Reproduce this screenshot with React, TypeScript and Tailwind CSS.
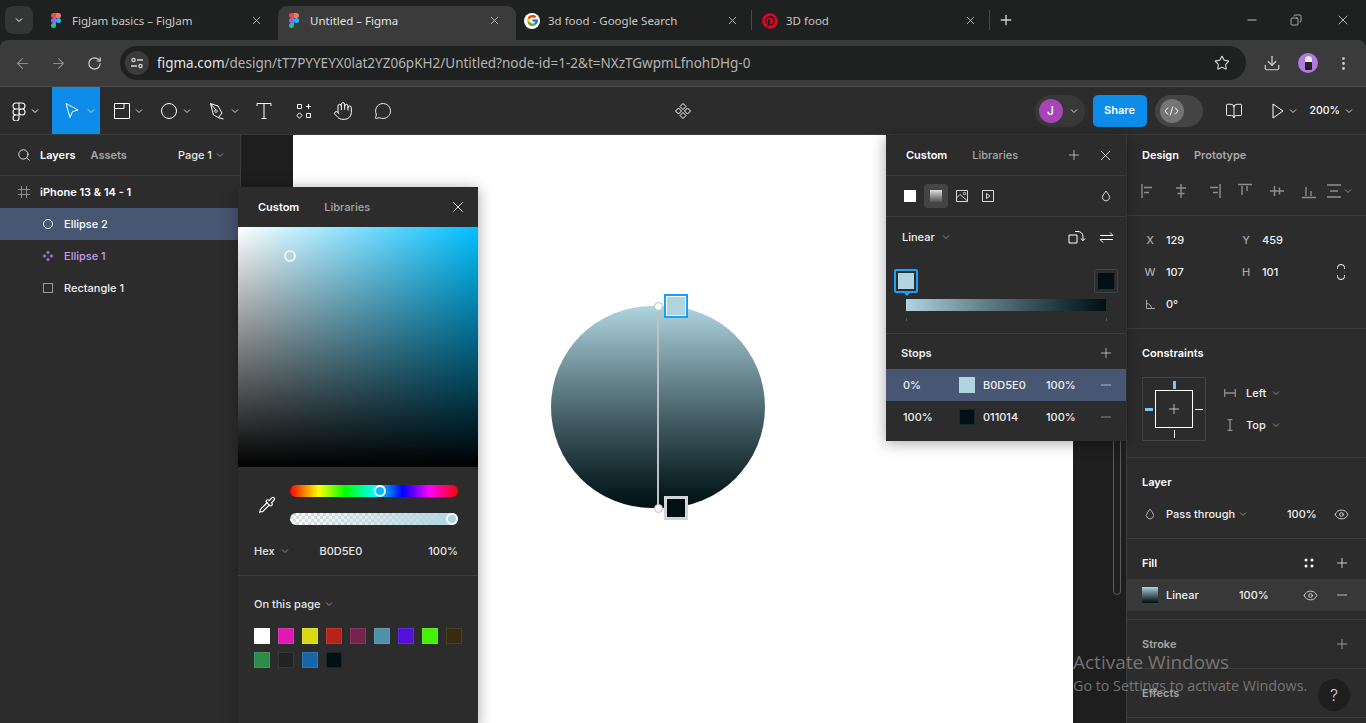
import type { ReactNode } from "react";
import {
  ArrowLeft,
  ArrowRight,
  BookOpen,
  Copy,
  Download,
  EllipsisVertical,
  Eye,
  Hand,
  MessageCircle,
  Minus,
  Pipette,
  Plus,
  RotateCw,
  Search,
  Star,
  X,
} from "lucide-react";
import { FcGoogle } from "react-icons/fc";
import { FaPinterest } from "react-icons/fa";

const swatches = [
  "#ffffff", "#e019b4", "#d9d915", "#b92216", "#75224e", "#5090a8", "#5310da", "#46f108", "#3a2b10",
  "#2b8b47", "#222222", "#1766a6", "#011014",
];

function Chevron({ className = "" }: { className?: string }) {
  return (
    <svg width="8" height="6" viewBox="0 0 8 6" fill="none" stroke="currentColor" className={className}>
      <path d="M1 1.5 4 4.5 7 1.5" />
    </svg>
  );
}

function FigmaLogo() {
  return (
    <svg width="10" height="15" viewBox="0 0 38 57">
      <path fill="#f24e1e" d="M0 9.5A9.5 9.5 0 0 1 9.5 0H19v19H9.5A9.5 9.5 0 0 1 0 9.5Z" />
      <path fill="#ff7262" d="M19 0h9.5a9.5 9.5 0 0 1 0 19H19V0Z" />
      <path fill="#1abcfe" d="M19 28.5a9.5 9.5 0 1 1 19 0 9.5 9.5 0 0 1-19 0Z" />
      <path fill="#a259ff" d="M0 28.5A9.5 9.5 0 0 1 9.5 19H19v19H9.5A9.5 9.5 0 0 1 0 28.5Z" />
      <path fill="#0acf83" d="M0 47.5A9.5 9.5 0 0 1 9.5 38H19v9.5a9.5 9.5 0 0 1-19 0Z" />
    </svg>
  );
}

function Drop() {
  return (
    <svg width="10" height="12" viewBox="0 0 10 12" fill="none" stroke="currentColor">
      <path d="M5 1 7.8 5a3.6 3.6 0 1 1-5.6 0L5 1Z" />
    </svg>
  );
}

function ChromeTab({ icon, title, active, sep }: { icon: ReactNode; title: string; active?: boolean; sep?: boolean }) {
  return (
    <div className={`relative flex h-[34px] w-[238px] items-center pb-[5px] text-[11.5px] ${active ? "rounded-t-[9px] bg-[#3b3b3b] text-[#e3e3e3]" : "text-[#c7c7c7]"}`}>
      <div className="flex w-[32px] justify-center">{icon}</div>
      <span className="w-[176px] truncate">{title}</span>
      <X size={13} strokeWidth={1.6} className="ml-[2px] text-[#c7c7c7]" />
      {sep && <div className="absolute right-[2px] top-[4px] h-[20px] w-px bg-[#4a4a4a]" />}
    </div>
  );
}

function Tool({ w, children, chevron, active }: { w: string; children: ReactNode; chevron?: boolean; active?: boolean }) {
  return (
    <div className={`relative flex h-full items-center justify-center text-white ${w} ${active ? "bg-[#0d8ce9]" : ""}`}>
      {children}
      {chevron && <Chevron className="absolute right-[5px] top-[21px] text-[#d8d8d8]" />}
    </div>
  );
}

function LayerRow({ icon, label, selected, purple }: { icon: ReactNode; label: string; selected?: boolean; purple?: boolean }) {
  return (
    <div className={`flex h-[32px] items-center pl-[41px] ${selected ? "bg-[#475673] text-white" : ""} ${purple ? "text-[#c79bf2]" : "text-[#f0f0f0]"}`}>
      <div className="flex w-[14px] justify-center">{icon}</div>
      <span className="ml-[9px]">{label}</span>
    </div>
  );
}

function Section({ h, children, className = "" }: { h: string; children: ReactNode; className?: string }) {
  return <div className={`border-b border-[#3d3d3d] ${h} ${className}`}>{children}</div>;
}

function PropRow({ a, av, b, bv }: { a: ReactNode; av: string; b?: ReactNode; bv?: string }) {
  return (
    <div className="flex h-[32px] items-center">
      <div className="flex w-[16px] justify-center text-[#a8a8a8]">{a}</div>
      <span className="ml-[8px] w-[72px] text-[#f0f0f0]">{av}</span>
      {b && <div className="flex w-[16px] justify-center text-[#a8a8a8]">{b}</div>}
      {bv && <span className="ml-[8px] text-[#f0f0f0]">{bv}</span>}
    </div>
  );
}

function AlignIcon({ d }: { d: string }) {
  return (
    <svg width="16" height="16" viewBox="0 0 16 16" stroke="#8e8e8e" strokeWidth="1.4" fill="none" className="w-[32px]">
      <path d={d} />
    </svg>
  );
}

export default function App() {
  return (
    <div className="flex h-[723px] w-[1366px] flex-col overflow-hidden bg-[#1f2020] font-['Inter',sans-serif] text-[11px] font-medium">
      {/* browser tabs */}
      <div className="flex h-[40px] shrink-0 items-end font-['Noto_Sans',sans-serif] font-normal">
        <div className="mb-[6px] ml-[5px] mr-[7px] flex h-[28px] w-[28px] items-center justify-center rounded-[8px] bg-[#343535] text-white">
          <Chevron />
        </div>
        <ChromeTab icon={<FigmaLogo />} title="FigJam basics – FigJam" />
        <ChromeTab icon={<FigmaLogo />} title="Untitled – Figma" active />
        <ChromeTab
          icon={
            <div className="flex h-[16px] w-[16px] items-center justify-center rounded-full bg-white">
              <FcGoogle size={13} />
            </div>
          }
          title="3d food - Google Search"
          sep
        />
        <ChromeTab icon={<FaPinterest size={16} color="#e60023" />} title="3D food" sep />
        <Plus size={16} strokeWidth={2} className="mb-[12px] ml-[6px] text-[#d0d0d0]" />
        <div className="ml-auto flex items-center pb-[12px] text-[#f0f0f0]">
          <Minus size={14} strokeWidth={1.3} className="mr-[31px]" />
          <Copy size={12} strokeWidth={1.3} className="mr-[33px] scale-x-[-1]" />
          <X size={16} strokeWidth={1.1} className="mr-[15px]" />
        </div>
      </div>

      {/* address bar */}
      <div className="flex h-[47px] shrink-0 items-center rounded-t-[8px] border-b border-[#4a4a4a] bg-[#3b3b3b] font-['Noto_Sans',sans-serif] font-normal text-[#c7c7c7]">
        <ArrowLeft size={17} strokeWidth={1.6} className="ml-[14px] text-[#8b8b8b]" />
        <ArrowRight size={17} strokeWidth={1.6} className="ml-[19px] text-[#8b8b8b]" />
        <RotateCw size={15} strokeWidth={1.8} className="ml-[20px] text-[#d0d0d0]" />
        <div className="ml-[18px] flex h-[34px] w-[1126px] items-center rounded-full bg-[#1f2020]">
          <div className="ml-[5px] flex h-[24px] w-[24px] items-center justify-center rounded-full bg-[#3b3b3b]">
            <svg width="14" height="12" viewBox="0 0 14 12" fill="none" stroke="#d8d8d8" strokeWidth="1.3">
              <circle cx="3.5" cy="3" r="1.6" />
              <path d="M7 3h6M1 9h6" />
              <circle cx="10.5" cy="9" r="1.6" />
            </svg>
          </div>
          <span className="ml-[8px] text-[13.5px] text-[#e3e3e3]">
            figma.com<span className="text-[#b4b4b4]">/design/tT7PYYEYX0lat2YZ06pKH2/Untitled?node-id=1-2&amp;t=NXzTGwpmLfnohDHg-0</span>
          </span>
          <Star size={16} strokeWidth={1.7} className="ml-auto mr-[16px] text-[#d0d0d0]" />
        </div>
        <Download size={18} strokeWidth={1.6} className="ml-[17px] text-[#d0d0d0]" />
        <div className="ml-[17px] flex h-[20px] w-[20px] flex-col items-center justify-center rounded-full bg-[#b07be0]">
          <div className="h-[6px] w-[7px] rounded-t-full bg-[#e8e8e8]" />
          <div className="h-[8px] w-[7px] rounded-b-[1px] bg-[#222]" />
        </div>
        <EllipsisVertical size={17} className="ml-[17px] text-[#d0d0d0]" />
      </div>

      {/* figma toolbar */}
      <div className="grid h-[48px] shrink-0 grid-cols-[1fr_auto_1fr] border-b border-[#3a3a3a] bg-[#2c2c2c]">
        <div className="flex h-[47px]">
          <Tool w="w-[52px]">
            <svg width="16" height="20" viewBox="0 0 16 20" fill="none" stroke="white" strokeWidth="1.1" className="mr-[14px]">
              <path d="M8 2H5a3 3 0 0 0 0 6h3V2Zm0 0h3a3 3 0 0 1 0 6H8V2Zm0 6H5a3 3 0 0 0 0 6h3V8Zm3 0a3 3 0 1 1 0 6 3 3 0 0 1 0-6ZM8 14H5a3 3 0 1 0 3 3v-3Z" />
            </svg>
            <Chevron className="absolute right-[13px] top-[21px]" />
          </Tool>
          <Tool w="w-[48px]" active chevron>
            <svg width="16" height="18" viewBox="0 0 16 18" fill="none" stroke="white" className="mr-[8px]">
              <path d="M2 1.5 14 8l-5.5 1.6L6 15.5 2 1.5Z" />
            </svg>
          </Tool>
          <Tool w="w-[48px]" chevron>
            <svg width="16" height="16" viewBox="0 0 16 16" fill="none" stroke="white" className="mr-[4px]">
              <path d="M.5.5h15v15H.5zM.5 5.5h9.5V.5" />
            </svg>
          </Tool>
          <Tool w="w-[48px]" chevron>
            <svg width="16" height="16" viewBox="0 0 16 16" fill="none" stroke="white" className="mr-[6px]">
              <circle cx="8" cy="8" r="7.5" />
            </svg>
          </Tool>
          <Tool w="w-[48px]" chevron>
            <svg width="16" height="18" viewBox="0 0 16 18" fill="none" stroke="white" className="mr-[6px]">
              <path d="M1.5 1.5 9 4l4 7-3.5 4.5-5-2.5-3-11.5Zm0 0L7 8m2 7.5 5.5 1.5M7 8a1.2 1.2 0 1 0 .01 0" />
            </svg>
          </Tool>
          <Tool w="w-[40px]">
            <svg width="16" height="18" viewBox="0 0 16 18" fill="none" stroke="white">
              <path d="M1 4V1.5h14V4M8 1.5v15M5.5 16.5h5" />
            </svg>
          </Tool>
          <Tool w="w-[39px]">
            <svg width="16" height="16" viewBox="0 0 16 16" fill="none" stroke="white">
              <path d="M1.5 1.5h4v4h-4zM10.500 10.500h4v4h-4zM12.500 1v5M10 3.500h5M3.500 9.800l2.700 2.700-2.700 2.700-2.700-2.700z" />
            </svg>
          </Tool>
          <Tool w="w-[40px]">
            <Hand size={20} strokeWidth={1.2} />
          </Tool>
          <Tool w="w-[40px]">
            <MessageCircle size={18} strokeWidth={1.2} />
          </Tool>
        </div>

        <div className="flex h-[47px] items-center justify-center text-white">
          <svg width="18" height="18" viewBox="0 0 18 18" fill="none" stroke="white">
            <path d="M9 1.500 12 4.500 9 7.500 6 4.500zM9 10.500 12 13.500 9 16.500 6 13.500zM4.500 6 7.500 9 4.500 12 1.500 9zM13.500 6 16.500 9 13.500 12 10.500 9z" />
          </svg>
        </div>

        <div className="flex h-[47px] items-center justify-end text-white">
          <div className="flex h-[32px] w-[50px] items-center rounded-full bg-[#383838]">
            <div className="ml-[4px] flex h-[24px] w-[24px] items-center justify-center rounded-full bg-[#a745b8] text-[12px]">J</div>
            <Chevron className="ml-[7px] text-[#d8d8d8]" />
          </div>
          <div className="ml-[8px] flex h-[32px] w-[54px] items-center justify-center rounded-[5px] bg-[#0d8ce9] font-semibold">Share</div>
          <div className="ml-[8px] flex h-[32px] w-[48px] items-center rounded-full bg-[#444444]">
            <div className="ml-[5px] flex h-[24px] w-[24px] items-center justify-center rounded-full bg-[#757575]">
              <svg width="15" height="10" viewBox="0 0 15 10" fill="none" stroke="white">
                <path d="M4 1.500 1 5l3 3.500M11 1.500 14 5l-3 3.500M8.800.5 6.200 9.500" />
              </svg>
            </div>
          </div>
          <BookOpen size={18} strokeWidth={1.2} className="ml-[22px]" />
          <svg width="12" height="16" viewBox="0 0 12 16" fill="none" stroke="white" className="ml-[29px]">
            <path d="M1 1v14l10-7z" />
          </svg>
          <Chevron className="ml-[5px] text-[#d8d8d8]" />
          <span className="ml-[13px] text-[10.5px]">200%</span>
          <Chevron className="ml-[5px] mr-[13px] text-[#d8d8d8]" />
        </div>
      </div>

      {/* editor */}
      <div className="relative flex min-h-0 flex-1">
        {/* layers panel */}
        <div className="w-[241px] shrink-0 border-r border-[#3d3d3d] bg-[#2c2c2c]">
          <div className="flex h-[41px] items-center border-b border-[#3d3d3d] pl-[17px]">
            <Search size={14} strokeWidth={1.4} className="text-white" />
            <span className="ml-[9px] font-semibold text-white">Layers</span>
            <span className="ml-[15px] font-semibold text-[#a8a8a8]">Assets</span>
            <span className="ml-[51px] text-[#e6e6e6]">Page 1</span>
            <Chevron className="ml-[4px] text-[#8a8a8a]" />
          </div>
          <div className="flex h-[32px] items-center pl-[18px] font-semibold text-white">
            <svg width="12" height="12" viewBox="0 0 12 12" stroke="#8e8e8e" fill="none">
              <path d="M3.500 0v12M8.500 0v12M0 3.500h12M0 8.500h12" />
            </svg>
            <span className="ml-[10px]">iPhone 13 &amp; 14 - 1</span>
          </div>
          <LayerRow
            selected
            label="Ellipse 2"
            icon={<span className="h-[10px] w-[10px] rounded-full border border-white" />}
          />
          <LayerRow
            purple
            label="Ellipse 1"
            icon={
              <svg width="12" height="12" viewBox="0 0 12 12" fill="#9a6fd0">
                <path d="M6 .5 8 2.500 6 4.500 4 2.500zM6 7.500 8 9.500 6 11.500 4 9.500zM2.500 4 4.500 6 2.500 8 .5 6zM9.500 4 11.500 6 9.500 8 7.500 6z" />
              </svg>
            }
          />
          <LayerRow label="Rectangle 1" icon={<span className="h-[10px] w-[10px] border border-[#9a9a9a]" />} />
        </div>

        {/* canvas */}
        <div className="relative flex-1 bg-[#1e1e1e]">
          <div className="ml-[52px] h-full w-[780px] bg-white" />
          {/* gradient ellipse on canvas */}
          <div className="absolute left-[310px] top-[171px] h-[202px] w-[214px] rounded-full bg-gradient-to-b from-[#b0d5e0] to-[#011014]" />
          <div className="absolute left-[416px] top-[171px] h-[202px] w-[2px] bg-[#c0c0c0]" />
          <div className="absolute left-[413px] top-[167px] h-[9px] w-[9px] rounded-full border border-[#bbb] bg-white" />
          <div className="absolute left-[413px] top-[369px] h-[9px] w-[9px] rounded-full border border-[#bbb] bg-white" />
          <div className="absolute left-[423px] top-[159px] h-[24px] w-[24px] border-2 border-[#18a0fb] bg-[#b0d5e0] outline outline-1 -outline-offset-3 outline-white" />
          <div className="absolute left-[423px] top-[361px] h-[24px] w-[24px] border-[3px] border-[#d4d4d4] bg-[#011014]" />
          {/* scrollbar */}
          <div className="absolute left-[872px] top-[20px] h-[440px] w-[8px] rounded-full border border-[#5a5a5a]" />
        </div>

        {/* design panel */}
        <div className="w-[240px] shrink-0 border-l border-[#3d3d3d] bg-[#2c2c2c] text-[#f0f0f0]">
          <Section h="h-[81px]" className="pl-[15px]">
            <div className="flex h-[40px] items-center">
              <span className="font-semibold text-white">Design</span>
              <span className="ml-[15px] font-semibold text-[#a8a8a8]">Prototype</span>
            </div>
            <div className="-ml-[9px] flex h-[32px] items-center">
              <AlignIcon d="M1 1v14M3 4.500h8M3 9.500h5" />
              <AlignIcon d="M8 1v14M3 5h10M4.500 10.500h7" />
              <AlignIcon d="M15 1v14M5 4.500h8M8 9.500h5" />
              <AlignIcon d="M1 1.500h14M5 3v9M10 3v5" />
              <AlignIcon d="M1 8h14M5.500 3v10M10.500 4.500v7" />
              <AlignIcon d="M1 14.500h14M5 4v9M10 8v5" />
              <svg width="16" height="16" viewBox="0 0 16 16" stroke="#8e8e8e" strokeWidth="1.3" fill="none" className="ml-[1px]">
                <path d="M1 2h14M1 14h14M4 8h8" />
              </svg>
              <Chevron className="ml-[2px] text-[#8a8a8a]" />
            </div>
          </Section>
          <Section h="h-[113px]" className="relative pl-[15px] pt-[8px]">
            <PropRow a="X" av="129" b="Y" bv="459" />
            <PropRow a="W" av="107" b="H" bv="101" />
            <PropRow
              a={
                <svg width="9" height="9" viewBox="0 0 9 9" fill="none" stroke="#a8a8a8">
                  <path d="M.5 0v8.500H9M.5 3.500a5 5 0 0 1 5 5" />
                </svg>
              }
              av="0°"
            />
            <svg width="8" height="16" viewBox="0 0 8 16" fill="none" stroke="white" className="absolute left-[210px] top-[48px]">
              <path d="M.5 5V3.500a3.500 3 0 0 1 7 0V5M.5 11v1.500a3.500 3 0 0 0 7 0V11" />
            </svg>
          </Section>
          <Section h="h-[129px]" className="pl-[15px]">
            <div className="flex h-[48px] items-center pt-[1px] font-semibold text-white">Constraints</div>
            <div className="flex">
              <div className="relative h-[64px] w-[64px] border border-[#444]">
                <div className="absolute left-[12px] top-[12px] flex h-[38px] w-[38px] items-center justify-center border border-white">
                  <Plus size={16} strokeWidth={1} className="text-white" />
                </div>
                <div className="absolute left-[30px] top-[3px] h-[8px] w-[3px] bg-[#7cc4f8]" />
                <div className="absolute left-[2px] top-[30px] h-[3px] w-[8px] bg-[#7cc4f8]" />
                <div className="absolute left-[52px] top-[31px] h-px w-[8px] bg-white" />
                <div className="absolute left-[31px] top-[52px] h-[8px] w-px bg-white" />
              </div>
              <div className="ml-[18px]">
                <div className="flex h-[32px] items-center">
                  <svg width="12" height="8" viewBox="0 0 12 8" fill="none" stroke="#8e8e8e" strokeWidth="1.3">
                    <path d="M.7 0v8M11.300 0v8M1 4h10" />
                  </svg>
                  <span className="ml-[10px]">Left</span>
                  <Chevron className="ml-[6px] text-[#8a8a8a]" />
                </div>
                <div className="flex h-[32px] items-center">
                  <svg width="12" height="12" viewBox="0 0 12 12" fill="none" stroke="#8e8e8e" strokeWidth="1.3">
                    <path d="M3.500.7h5M3.500 11.300h5M6 1v10" />
                  </svg>
                  <span className="ml-[10px]">Top</span>
                  <Chevron className="ml-[6px] text-[#8a8a8a]" />
                </div>
              </div>
            </div>
          </Section>
          <Section h="h-[81px]" className="pl-[15px]">
            <div className="flex h-[48px] items-center pt-[1px] font-semibold text-white">Layer</div>
            <div className="flex h-[16px] items-center">
              <div className="flex w-[16px] justify-center text-[#b0b0b0]">
                <Drop />
              </div>
              <span className="ml-[8px] w-[73px]">Pass through</span>
              <Chevron className="text-[#8a8a8a]" />
              <span className="ml-[40px]">100%</span>
              <Eye size={15} strokeWidth={1.3} className="ml-[17px]" />
            </div>
          </Section>
          <Section h="h-[81px]">
            <div className="flex h-[40px] items-center pl-[15px] pr-[16px] pt-[8px] font-semibold text-white">
              <span>Fill</span>
              <svg width="10" height="10" viewBox="0 0 10 10" fill="white" className="ml-auto mr-[20px]">
                <circle cx="2" cy="2" r="1.500" />
                <circle cx="8" cy="2" r="1.500" />
                <circle cx="2" cy="8" r="1.500" />
                <circle cx="8" cy="8" r="1.500" />
              </svg>
              <Plus size={16} strokeWidth={1.1} />
            </div>
            <div className="flex h-[32px] items-center bg-[#383838] pl-[15px]">
              <div className="h-[16px] w-[16px] bg-gradient-to-b from-[#b0d5e0] to-[#011014]" />
              <span className="ml-[8px] w-[73px]">Linear</span>
              <span>100%</span>
              <Eye size={15} strokeWidth={1.3} className="ml-[34px]" />
              <Minus size={16} strokeWidth={1.1} className="ml-[16px]" />
            </div>
          </Section>
          <Section h="h-[49px]" className="flex items-center pl-[15px] pr-[16px]">
            <span className="font-semibold text-[#a8a8a8]">Stroke</span>
            <Plus size={16} strokeWidth={1} className="ml-auto text-[#c8c8c8]" />
          </Section>
          <Section h="h-[49px]" className="flex items-center pl-[15px]">
            <span className="font-semibold text-[#a8a8a8]">Effects</span>
          </Section>
        </div>

        {/* colour picker popup */}
        <div className="absolute left-[238px] top-[52px] h-[540px] w-[240px] bg-[#2c2c2c] shadow-[0_2px_14px_rgba(0,0,0,0.35)]">
          <div className="flex h-[40px] items-center pl-[20px] pr-[11px]">
            <span className="font-semibold text-white">Custom</span>
            <span className="ml-[25px] text-[#a8a8a8]">Libraries</span>
            <X size={18} strokeWidth={1.1} className="ml-auto text-white" />
          </div>
          <div className="relative h-[240px] w-[240px] bg-[linear-gradient(to_top,#000,transparent),linear-gradient(to_right,#fff,#00bfff)]">
            <div className="absolute left-[46px] top-[23px] h-[12px] w-[12px] rounded-full border-2 border-[#f2f2f2] bg-[#b0d5e0]" />
          </div>
          <div className="flex h-[72px] items-start pl-[20px] pt-[18px]">
            <Pipette size={18} strokeWidth={1.6} className="mt-[11px] text-white" />
            <div className="ml-[14px]">
              <div className="relative h-[12px] w-[168px] rounded-full bg-[linear-gradient(to_right,#f00,#ff0_17%,#0f0_33%,#0ff_50%,#00f_67%,#f0f_83%,#f00)]">
                <div className="absolute left-[84px] top-[0px] h-[12px] w-[12px] rounded-full border-2 border-white bg-[#00bfff]" />
              </div>
              <div className="relative mt-[16px] h-[12px] w-[168px] rounded-full bg-[linear-gradient(to_right,transparent,#b0d5e0),repeating-conic-gradient(#dcdcdc_0_25%,#ffffff_0_50%)] bg-[length:100%_100%,6px_6px]">
                <div className="absolute left-[156px] top-[0px] h-[12px] w-[12px] rounded-full border-2 border-white bg-[#b0d5e0]" />
              </div>
            </div>
          </div>
          <div className="flex h-[24px] items-center pl-[16px] text-[#e6e6e6]">
            <span>Hex</span>
            <Chevron className="ml-[6px] text-[#8a8a8a]" />
            <span className="ml-[31px]">B0D5E0</span>
            <span className="ml-auto mr-[20px]">100%</span>
          </div>
          <div className="mt-[12px] border-t border-[#3d3d3d] pl-[16px] pt-[20px]">
            <div className="flex items-center text-[#e6e6e6]">
              <span>On this page</span>
              <Chevron className="ml-[5px] text-[#8a8a8a]" />
            </div>
            <div className="mt-[15px] grid grid-cols-[repeat(9,16px)] gap-[8px]">
              {swatches.map((color) => (
                <div key={color} className="h-[16px] w-[16px] border border-white/10" style={{ backgroundColor: color }} />
              ))}
            </div>
          </div>
        </div>

        {/* gradient popup */}
        <div className="absolute left-[886px] top-0 h-[306px] w-[240px] bg-[#2c2c2c] text-[#f0f0f0] shadow-[0_2px_14px_rgba(0,0,0,0.35)]">
          <div className="flex h-[41px] items-center border-b border-[#3d3d3d] pl-[20px] pr-[12px]">
            <span className="font-semibold text-white">Custom</span>
            <span className="ml-[25px] text-[#a8a8a8]">Libraries</span>
            <Plus size={16} strokeWidth={1.1} className="ml-auto text-[#d8d8d8]" />
            <X size={17} strokeWidth={1.1} className="ml-[15px] text-white" />
          </div>
          <div className="flex h-[41px] items-center border-b border-[#3d3d3d] pl-[18px] pr-[15px]">
            <div className="h-[12px] w-[12px] bg-white" />
            <div className="ml-[8px] flex h-[24px] w-[24px] items-center justify-center rounded-[3px] bg-[#444]">
              <div className="h-[12px] w-[12px] bg-gradient-to-b from-[#ddd] to-[#555]" />
            </div>
            <svg width="12" height="12" viewBox="0 0 12 12" fill="none" stroke="#d8d8d8" className="ml-[8px]">
              <path d="M.5.5h11v11H.5zM.5 8 4 4.500l7.500 6.500" />
              <circle cx="8.500" cy="3.500" r="1.200" />
            </svg>
            <svg width="12" height="12" viewBox="0 0 12 12" fill="none" stroke="#d8d8d8" className="ml-[14px]">
              <path d="M.5.5h11v11H.5zM4.500 3.500 8 6 4.500 8.500z" />
            </svg>
            <div className="ml-auto text-[#d8d8d8]">
              <Drop />
            </div>
          </div>
          <div className="relative h-[117px] border-b border-[#3d3d3d]">
            <div className="flex h-[40px] items-center pl-[16px] pr-[12px]">
              <span>Linear</span>
              <Chevron className="ml-[7px] text-[#8a8a8a]" />
              <svg width="18" height="15" viewBox="0 0 18 15" fill="none" stroke="white" className="ml-auto mr-[13px]">
                <path d="M1 5h8v8H1zM7 1.500h3a5 5 0 0 1 5 5v4m-2.200-2 2.200 2.200 2.200-2.200" />
              </svg>
              <svg width="15" height="13" viewBox="0 0 15 13" fill="none" stroke="white">
                <path d="M1 4.500h13M11 1.500l3 3M14 8.500H1M4 11.500l-3-3" />
              </svg>
            </div>
            <div className="absolute left-[8px] top-[52px] h-[24px] w-[24px] rounded-[2px] border-2 border-[#18a0fb] p-[2px]">
              <div className="h-full w-full bg-[#b0d5e0]" />
            </div>
            <div className="absolute left-[18px] top-[76px] h-0 w-0 border-x-[3px] border-t-[3px] border-x-transparent border-t-[#18a0fb]" />
            <div className="absolute left-[208px] top-[52px] h-[24px] w-[24px] rounded-[2px] border border-[#444] p-[3px]">
              <div className="h-full w-full bg-[#011014]" />
            </div>
            <div className="absolute left-[20px] top-[82px] h-[12px] w-[200px] bg-gradient-to-r from-[#b0d5e0] to-[#011014]" />
            <div className="absolute left-[20px] top-[101px] h-[3px] w-px bg-[#555]" />
            <div className="absolute left-[220px] top-[101px] h-[3px] w-px bg-[#555]" />
          </div>
          <div className="flex h-[35px] items-center pl-[15px] pr-[12px] pt-[3px]">
            <span className="font-semibold">Stops</span>
            <Plus size={16} strokeWidth={1.1} className="ml-auto text-[#d8d8d8]" />
          </div>
          <div className="flex h-[32px] items-center bg-[#475673] pl-[17px] pr-[12px]">
            <span className="w-[56px]">0%</span>
            <div className="h-[16px] w-[16px] bg-[#b0d5e0]" />
            <span className="ml-[8px] w-[63px]">B0D5E0</span>
            <span>100%</span>
            <Minus size={16} strokeWidth={1.1} className="ml-auto text-[#d8d8d8]" />
          </div>
          <div className="flex h-[32px] items-center pl-[17px] pr-[12px]">
            <span className="w-[56px]">100%</span>
            <div className="h-[16px] w-[16px] border border-white/10 bg-[#011014]" />
            <span className="ml-[8px] w-[63px]">011014</span>
            <span>100%</span>
            <Minus size={16} strokeWidth={1.1} className="ml-auto text-[#a8a8a8]" />
          </div>
        </div>

        {/* windows watermark and help */}
        <div className="absolute left-[1073px] top-[514px] font-['Open_Sans',sans-serif] font-normal text-[#8a8a8a]/80">
          <div className="text-[19px] leading-[27px]">Activate Windows</div>
          <div className="text-[14.3px] leading-[19px]">Go to Settings to activate Windows.</div>
        </div>
        <div className="absolute left-[1318px] top-[544px] flex h-[32px] w-[32px] items-center justify-center rounded-full bg-[#1e1e1e] text-[16px] font-light text-[#d8d8d8]">
          ?
        </div>
      </div>
    </div>
  );
}
